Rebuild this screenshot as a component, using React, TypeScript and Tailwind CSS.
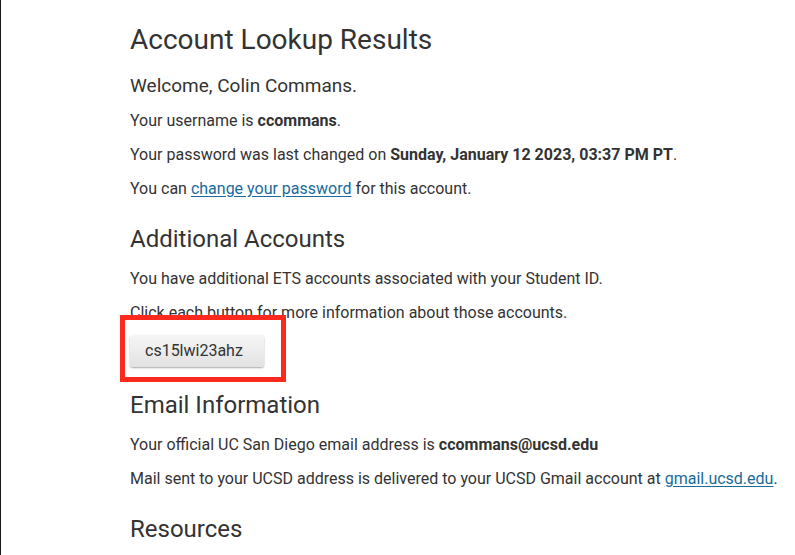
export default function App() {
  return (
    <main className="relative min-h-screen bg-white border-l border-[#1a1a1a] font-['Roboto',sans-serif] text-[#333]">
      <div className="flex flex-col items-start pl-[129px] pt-[23px]">
        <h1 className="text-[28px] leading-[34px] font-normal">Account Lookup Results</h1>
        <p className="mt-[15px] text-[19px] leading-[28px]">Welcome, Colin Commans.</p>
        <p className="mt-[9px] text-[16px] leading-[24px]">
          Your username is <strong className="font-bold">ccommans</strong>.
        </p>
        <p className="mt-[10px] text-[16px] leading-[24px]">
          Your password was last changed on <strong className="font-bold">Sunday, January 12 2023, 03:37 PM PT</strong>.
        </p>
        <p className="mt-[10px] text-[16px] leading-[24px]">
          You can <a href="#" className="text-[#1a6a9c] underline underline-offset-2">change your password</a> for this account.
        </p>

        <h2 className="mt-[23px] text-[24px] leading-[30px] font-normal">Additional Accounts</h2>
        <p className="mt-[13px] text-[16px] leading-[24px]">You have additional ETS accounts associated with your Student ID.</p>
        <p className="mt-[10px] text-[16px] leading-[24px]">Click each button for more information about those accounts.</p>
        <button className="mt-[10px] w-[134px] h-[32px] pl-[15px] text-left rounded-[3px] bg-gradient-to-b from-[#f6f6f6] to-[#e2e2e2] text-[16px] text-[#333] shadow-[0_1px_2px_rgba(0,0,0,0.35)]">
          cs15lwi23ahz
        </button>

        <h2 className="mt-[23px] text-[24px] leading-[30px] font-normal">Email Information</h2>
        <p className="mt-[13px] text-[16px] leading-[24px]">
          Your official UC San Diego email address is <strong className="font-bold">ccommans@ucsd.edu</strong>
        </p>
        <p className="mt-[10px] text-[16px] leading-[24px]">
          Mail sent to your UCSD address is delivered to your UCSD Gmail account at{" "}
          <a href="#" className="text-[#1a6a9c] underline underline-offset-2">gmail.ucsd.edu</a>.
        </p>

        <h2 className="mt-[23px] text-[24px] leading-[30px] font-normal">Resources</h2>
      </div>

      {/* annotation box */}
      <div className="absolute left-[119px] top-[315px] w-[166px] h-[67px] border-[5px] border-[#fc2a1e]" />
    </main>
  )
}
